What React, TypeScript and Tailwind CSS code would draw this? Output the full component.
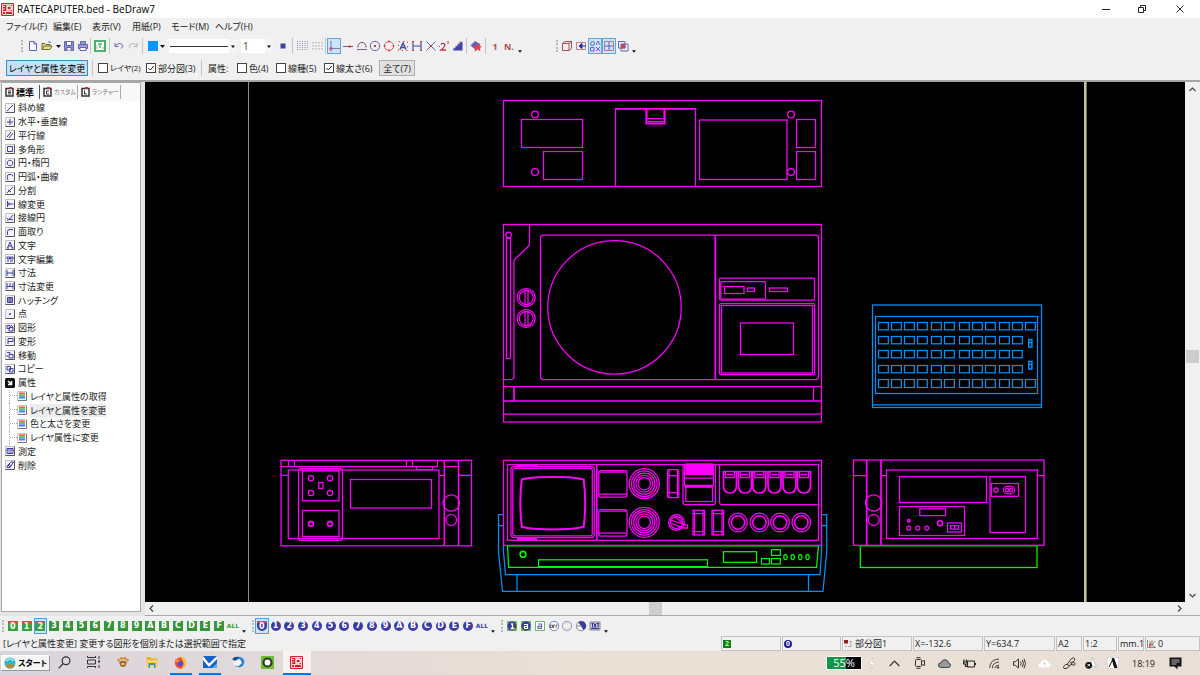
import { useState, type ReactNode } from 'react';

const HEX = ['0', '1', '2', '3', '4', '5', '6', '7', '8', '9', 'A', 'B', 'C', 'D', 'E', 'F'];

/* ---------- small shared parts ---------- */

function Sep() {
  return <span className="h-4 w-px shrink-0 bg-[#c4c4c4]" />;
}

function Grip() {
  return <span className="h-3 w-0 shrink-0 border-l-2 border-dotted border-[#b8b8b8]" />;
}

function Caret({ label }: { label: string }) {
  return (
    <button aria-label={label} className="flex h-4 w-2 shrink-0 items-center justify-center">
      <svg width="5" height="3" viewBox="0 0 5 3"><path d="M0 0h5L2.5 3z" fill="#111" /></svg>
    </button>
  );
}

function LowCaret({ label }: { label: string }) {
  return (
    <button aria-label={label} className="flex h-4 w-2 shrink-0 items-end justify-center pb-px">
      <svg width="4" height="3" viewBox="0 0 5 3"><path d="M0 0h5L2.5 3z" fill="#111" /></svg>
    </button>
  );
}

function Tool({ label, active, children }: { label: string; active?: boolean; children: ReactNode }) {
  return (
    <button
      aria-label={label}
      className={
        active
          ? 'flex h-4 w-full min-w-3.5 items-center justify-center border border-[#5aa7e0] bg-[#cce4f7]'
          : 'flex h-4 w-full min-w-3.5 items-center justify-center'
      }
    >
      <svg width="12" height="12" viewBox="0 0 12 12" fill="none" stroke="#6464b4" strokeWidth="1" className="shrink-0">
        {children}
      </svg>
    </button>
  );
}

/* ---------- title and menu ---------- */

function AppMark({ size }: { size: number }) {
  return (
    <svg width={size} height={size} viewBox="0 0 13 13">
      <rect width="13" height="13" rx="1" fill="#d3202b" />
      <path d="M1.500 1.500h10v10h-10z" fill="none" stroke="#fff" strokeWidth="0.8" />
      <path d="M6 3h2.500q2 0 2 2t-2 2H6z" fill="none" stroke="#fff" strokeWidth="1.300" />
      <path d="M2 3.500h2M2 6h2M2 8.500h9M4.500 8.500v2.500" stroke="#fff" strokeWidth="0.8" />
    </svg>
  );
}

function TitleBar() {
  return (
    <header className="flex h-[18px] shrink-0 items-center bg-white pl-px text-black">
      <AppMark size={13} />
      <h1 className="ml-[3px] text-[10px] leading-none">RATECAPUTER.bed - BeDraw7</h1>
      <div className="ml-auto flex">
        <button aria-label="最小化" className="flex h-[18px] w-9 items-center justify-center">
          <svg width="8" height="8" viewBox="0 0 8 8"><path d="M0 4.5h8" stroke="#222" /></svg>
        </button>
        <button aria-label="元に戻す" className="flex h-[18px] w-9 items-center justify-center">
          <svg width="8" height="8" viewBox="0 0 8 8" fill="none" stroke="#222"><path d="M.5 2.5h5v5h-5zM2.5 2.5v-2h5v5h-2" /></svg>
        </button>
        <button aria-label="閉じる" className="flex h-[18px] w-10 items-center justify-center">
          <svg width="8" height="8" viewBox="0 0 8 8"><path d="M.5.5l7 7M7.5.5l-7 7" stroke="#222" /></svg>
        </button>
      </div>
    </header>
  );
}

function MenuBar() {
  const items = ['ファイル(F)', '編集(E)', '表示(V)', '用紙(P)', 'モード(M)', 'ヘルプ(H)'];
  return (
    <nav className="grid h-[18px] shrink-0 grid-cols-[47px_39px_40px_39px_44px_40px] items-center pl-1.5 text-[9px]">
      {items.map((t) => (
        <button key={t} className="whitespace-nowrap text-left">{t}</button>
      ))}
    </nav>
  );
}

/* ---------- main toolbar ---------- */

function ToolBar() {
  return (
    <div className="flex h-5 shrink-0 items-center pl-[21px]">
      <Grip />
      <div className="ml-[3px] flex w-16 items-center">
        <Tool label="新規"><path d="M2.500 1.500h4.500l2.500 2.500v6.500h-7zM7 1.500V4h2.500" fill="#fff" /></Tool>
        <Tool label="開く"><path d="M1 9.500V3.500h3l1 1h4v1.500M1 9.500l2-3.500h8l-2 3.500z" fill="#e8e08a" stroke="#6d6d35" /><path d="M7 2q2-1 3 1" /></Tool>
        <Caret label="最近使ったファイル" />
        <Tool label="保存"><path d="M1.500 1.500h9v9h-9z" fill="#8c8ccc" /><path d="M3.500 1.500h5v4h-5zM4 10.500v-3h4v3" fill="#fff" /></Tool>
        <Tool label="印刷"><path d="M3.500 4.500v-3h5v3M1.500 4.500h9v4h-9z" fill="#9c9cd4" /><path d="M3 7.500h6v3H3z" fill="#fff" /></Tool>
      </div>
      <Sep />
      <div className="mx-px w-4">
        <Tool label="図面テンプレート"><path d="M1 1h10v10H1z" fill="#fff" stroke="#1f9d45" strokeWidth="1.600" /><path d="M4 4h4M6 4v4M2.500 6h1M2.500 8h1M9 8h1" stroke="#1f9d45" /></Tool>
      </div>
      <Sep />
      <div className="mx-0.5 flex w-7">
        <Tool label="元に戻す"><path d="M2 3v3.500h3.500M2.200 6Q6 2 9 4.500q2 2.500-1 4" /></Tool>
        <Tool label="やり直し"><path d="M10 3v3.500H6.500M9.800 6Q6 2 3 4.500q-2 2.500 1 4" stroke="#b0b0b8" /></Tool>
      </div>
      <Sep />
      <button aria-label="描画色" className="ml-[5px] h-2.5 w-2.5 bg-[#0795ff]" />
      <Caret label="色の選択" />
      <div className="ml-[3px] grid w-[68px] items-center">
        <select aria-label="線の種類" className="col-start-1 row-start-1 h-3.5 appearance-none bg-white text-transparent">
          <option>実線</option>
        </select>
        <svg className="pointer-events-none col-start-1 row-start-1" width="68" height="14" viewBox="0 0 68 14">
          <path d="M60 0h8v14h-8z" fill="#f4f4f4" />
          <path d="M1 7.500h58" stroke="#333" />
          <path d="M62 6.500h4l-2 2.500z" fill="#111" />
        </svg>
      </div>
      <div className="ml-1 grid w-8 items-center">
        <select aria-label="線の太さ" defaultValue="1" className="col-start-1 row-start-1 h-3.5 appearance-none bg-white pl-0.5 text-[10px] leading-none text-[#5a4630]">
          <option>1</option>
          <option>2</option>
        </select>
        <svg className="pointer-events-none col-start-1 row-start-1" width="32" height="14" viewBox="0 0 32 14">
          <path d="M24 0h8v14h-8z" fill="#f4f4f4" />
          <path d="M26 6.500h4l-2 2.500z" fill="#111" />
        </svg>
      </div>
      <div className="ml-[3px] w-3.5">
        <Tool label="点の形"><path d="M3.500 3.500h5v5h-5z" fill="#4040a8" stroke="none" /></Tool>
      </div>
      <span className="w-0.5" />
      <Sep />
      <div className="ml-px flex w-[30px]">
        <Tool label="グリッド"><path d="M1.500 1v10M4 1v10M6.500 1v10M9 1v10M11.300 1v10" stroke="#8c8cac" strokeDasharray="1 1" /></Tool>
        <Tool label="グリッド吸着"><path d="M2 2v9M5 2v9M8 2v9M11 2v9" stroke="#a0a0a0" strokeDasharray="1.500 1.500" /></Tool>
      </div>
      <span className="w-px" />
      <Sep />
      <div className="ml-px grid w-[138px] grid-cols-10">
        <Tool label="端点" active><path d="M3 1v10M1 8.500h10" stroke="#7a7ac0" /><path d="M2 7.500h2v2H2zM3 1v1M10 8.500h2M3 10.500v1" stroke="#e05050" strokeWidth=".8" /></Tool>
        <Tool label="線上"><path d="M1 6.500h10" stroke="#7a5080" /><path d="M7 5v3l3-1.500z" fill="#e03030" stroke="none" /></Tool>
        <Tool label="中点"><path d="M2 7q0-4.500 4-4.500T10 7M1 9.500h10" /><path d="M5 2.500h2M5 9.500h2M1.500 7h1M9.500 7h1" stroke="#e03030" /></Tool>
        <Tool label="円の中心"><circle cx="6" cy="6" r="4.700" /><path d="M5 6h2" stroke="#e03030" strokeWidth="2" /></Tool>
        <Tool label="円周"><circle cx="6" cy="6" r="4.500" stroke="#e05868" /><path d="M5 1.500h2M5 10.500h2M1.500 5v2M10.500 5v2" stroke="#e03030" strokeWidth="1.300" /></Tool>
        <Tool label="文字"><path d="M1.500 1.500h9v9h-9z" stroke="#e05050" strokeDasharray="1.500 3" /><path d="M3 9.500L6 3l3 6.500M4 7.500h4" stroke="#4a4aa8" strokeWidth="1.500" /></Tool>
        <Tool label="寸法"><path d="M2 2v8M10 2v8M2 6h8" stroke="#4a4aa8" strokeWidth="1.200" /><path d="M1 1.500h2M9 1.500h2M1 10.500h2M9 10.500h2" stroke="#e03030" /></Tool>
        <Tool label="交点"><path d="M1.500 1.500l9 9M10.500 1.500l-9 9" /><path d="M5.500 5.500h1v1h-1z" stroke="#e03030" /></Tool>
        <Tool label="二点間"><path d="M3 4.500q1.500-2 3.500-.5Q8 6 3 10h5" stroke="#b83848" strokeWidth="1.300" /><path d="M10 1v3M1 6.500h1" stroke="#e03030" /></Tool>
        <Tool label="塗り"><path d="M1.500 10.500V8h2V6h2V4h2V2h3v8.500z" fill="#4444a4" stroke="#9898cc" strokeWidth=".8" /></Tool>
      </div>
      <span className="w-px" />
      <Sep />
      <div className="mx-0.5 w-3.5">
        <Tool label="消しゴム"><path d="M1 5.500l4-4 5 3-4 5z" fill="#5c5cb8" /><path d="M6 6l1.500-2L9 6l2 .5-1.500 1.500.5 2.500-2.500-1.500L5 11l.5-2.500L4 7z" fill="#e04048" stroke="#e04048" /></Tool>
      </div>
      <Sep />
      <div className="ml-0.5 flex w-7 text-[9px] font-bold leading-none text-[#a85050]">
        <button className="h-4 w-3.5">1</button>
        <button className="h-4 w-3.5">N.</button>
      </div>
      <LowCaret label="その他のスナップ" />
      <span className="w-8" />
      <Grip />
      <div className="ml-0.5 grid w-[70px] grid-cols-5">
        <Tool label="立体"><path d="M1.500 3.500h6.500v7H1.500zM1.500 3.500L4 1.500h6.500v7L8 10.500M8 3.500l2.500-2" stroke="#a85058" /></Tool>
        <Tool label="左へ"><path d="M1.500 2.500h9v7h-9z" stroke="#c08088" /><path d="M4 6h7M7 3.500L4 6l3 2.500z" fill="#2c2c98" stroke="#2c2c98" /></Tool>
        <Tool label="文字図形" active><circle cx="3.500" cy="3.500" r="2" /><path d="M7 5l2-4 2 4M1.500 7.500h3.500v3.500H1.500zM7 7l4 4M11 7l-4 4" /></Tool>
        <Tool label="用紙枠" active><path d="M1.500 1.500h9v9h-9z" stroke="#b07888" /><path d="M6 2v8M2 6h8" stroke="#5c5cc0" /></Tool>
        <Tool label="重なり"><path d="M1.500 1.500h6.500v6.500H1.500zM4 4h7v7H4z" /><path d="M4.500 4.500h3.500v3.500H4.500z" fill="#c04858" stroke="#c04858" /></Tool>
      </div>
      <LowCaret label="その他の表示" />
    </div>
  );
}

/* ---------- option row ---------- */

function Check({ text, initial, className }: { text: string; initial?: boolean; className: string }) {
  const [on, setOn] = useState(!!initial);
  return (
    <label className={className}>
      <span className="grid h-2.5 w-2.5 shrink-0 place-items-center">
        <input
          type="checkbox"
          checked={on}
          onChange={(e) => setOn(e.target.checked)}
          className="col-start-1 row-start-1 h-2.5 w-2.5 appearance-none border border-[#444] bg-white"
        />
        {on && (
          <svg className="pointer-events-none col-start-1 row-start-1" width="8" height="8" viewBox="0 0 8 8">
            <path d="M1.300 4l2 2L6.800 2" fill="none" stroke="#222" />
          </svg>
        )}
      </span>
      {text}
    </label>
  );
}

function OptionRow() {
  return (
    <div className="flex h-[26px] shrink-0 items-center whitespace-nowrap border-b-2 border-[#a6a6a6] pl-1.5 text-[9px] leading-none">
      <button className="h-4 w-[82px] border border-[#3c8cc8] bg-[#c4e0f5] text-black">レイヤと属性を変更</button>
      <span className="w-1" />
      <Sep />
      <Check text="レイヤ(2)" className="ml-[5px] flex w-12 items-center gap-0.5 text-[8px]" />
      <Check text="部分図(3)" initial className="flex w-[55px] items-center gap-0.5" />
      <Sep />
      <span className="ml-1.5 w-[29px]">属性:</span>
      <Check text="色(4)" className="flex w-[39px] items-center gap-0.5" />
      <Check text="線種(5)" className="flex w-12 items-center gap-0.5" />
      <Check text="線太さ(6)" initial className="flex w-[55px] items-center gap-0.5" />
      <button className="h-4 w-9 border border-[#adadad] bg-[#e1e1e1]">全て(7)</button>
    </div>
  );
}

/* ---------- side panel ---------- */

type Entry = { name: string; art: string; sub?: boolean; current?: boolean; dark?: boolean };

const ENTRIES: Entry[] = [
  { name: '斜め線', art: 'M2 8L8 2' },
  { name: '水平・垂直線', art: 'M5 2v6M2 5h6' },
  { name: '平行線', art: 'M2 7l4-5M4 8l4-5' },
  { name: '多角形', art: 'M2.500 2.500h5v5h-5z' },
  { name: '円・楕円', art: 'M5 2.200a2.800 2.800 0 1 0 .01 0z' },
  { name: '円弧・曲線', art: 'M3 8Q1 3 4 2.500Q7 2 8 4' },
  { name: '分割', art: 'M2 8L8 2M3 5l3 2' },
  { name: '線変更', art: 'M2.500 2v6M2.500 5h6M4 3.500v3' },
  { name: '接線円', art: 'M1.500 5L4 7l4-5M2 7.500q2-3 6-.5' },
  { name: '面取り', art: 'M2.500 8V4.500Q2.500 2.500 5 2.500h3' },
  { name: '文字', art: 'M2.500 8L5 2l2.500 6M3.500 6h3M2 8h2M6.500 8h2' },
  { name: '文字編集', art: 'M2 3h2.500v2H2zM5.500 3H8v2H5.500zM2 7h2M5 7h3' },
  { name: '寸法', art: 'M2 2v6M8 2v6M2 5h6' },
  { name: '寸法変更', art: 'M2 2v6M8 2v6M2 5.500h6M5 2v3' },
  { name: 'ハッチング', art: 'M2.500 2.500h5v5h-5zM3 4h4M3 6h4M5 3v4' },
  { name: '点', art: 'M4.500 4.500h1v1h-1z' },
  { name: '図形', art: 'M2 2.500h3v3H2zM4 4.500h4v3.500H4zM6 2l2 2' },
  { name: '変形', art: 'M3 8V2.500h5v3H3' },
  { name: '移動', art: 'M2 2.500h3v2M4 4.500h4V8H4zM2 5v2' },
  { name: 'コピー', art: 'M2 2.500h3.500V6H2zM4.500 4.500H8V8H4.500z' },
  { name: '属性', art: 'M3 3l3 3M6.500 3v3.500H3', dark: true },
  { name: 'レイヤと属性の取得', art: '', sub: true },
  { name: 'レイヤと属性を変更', art: '', sub: true, current: true },
  { name: '色と太さを変更', art: '', sub: true },
  { name: 'レイヤ属性に変更', art: '', sub: true },
  { name: '測定', art: 'M2 2.500h6v5H2zM2 4h6M3.500 6h3' },
  { name: '削除', art: 'M2 6l4-4h2.500L5 7.500H2zM3 5l2 2M4 4l2 2' },
];

function EntryIcon({ e }: { e: Entry }) {
  if (e.sub) {
    return (
      <svg width="10" height="10" viewBox="0 0 10 10" className="shrink-0">
        <path d="M.5.5h9v9h-9z" fill="#f8f8f8" stroke="#c4c4c4" />
        <path d="M9.500 1v8.500H1" fill="none" stroke="#777" />
        <rect x="2" y="1.500" width="6" height="2" fill="#ff5a3c" />
        <rect x="2" y="3.500" width="6" height="2" fill="#3cd070" />
        <rect x="2" y="5.500" width="6" height="2" fill="#5078ff" />
      </svg>
    );
  }
  if (e.dark) {
    return (
      <svg width="10" height="10" viewBox="0 0 10 10" className="shrink-0">
        <rect width="10" height="10" rx="1.500" fill="#111" />
        <path d={e.art} fill="none" stroke="#fff" strokeWidth="1.500" />
      </svg>
    );
  }
  return (
    <svg width="10" height="10" viewBox="0 0 10 10" className="shrink-0">
      <path d="M.5.5h9v9h-9z" fill="#f4f4f8" stroke="#c0c0c0" />
      <path d="M9.500.5v9H.5" fill="none" stroke="#555" />
      <path d={e.art} fill="none" stroke="#3c3ca8" strokeWidth="1" />
    </svg>
  );
}

function TabIcon({ d }: { d: string }) {
  return (
    <svg width="9" height="10" viewBox="0 0 9 10" className="shrink-0">
      <path d="M1 1.500h7v7.500H1z" fill="#fff" stroke="#333" strokeWidth="1.500" />
      <path d="M4 0h3v2H4z" fill="#c03038" />
      <path d={d} fill="none" stroke="#333" />
    </svg>
  );
}

function SidePanel() {
  return (
    <aside className="flex w-[145px] shrink-0 flex-col bg-[#e4e4e4] pb-1 pl-px pr-1">
      <div className="flex flex-1 flex-col border border-[#a8a8a8] bg-white">
        <div role="tablist" className="flex h-[18px] shrink-0 items-center bg-[#f8f8f8] text-[6px] leading-none text-[#777]">
          <button role="tab" aria-selected="true" className="flex h-3.5 w-[38px] items-center gap-0.5 whitespace-nowrap border-r border-[#555] pl-[3px] text-[9px] font-bold text-black">
            <TabIcon d="M3 4h3M3 5.500h3M3 7h3" />標準
          </button>
          <button role="tab" aria-selected="false" className="flex h-3.5 w-[38px] items-center gap-0.5 whitespace-nowrap border-r border-[#aaa] pl-[3px]">
            <TabIcon d="M6 4H3.500v3H6" />カスタム
          </button>
          <button role="tab" aria-selected="false" className="flex h-3.5 w-[43px] items-center gap-0.5 whitespace-nowrap border-r border-[#aaa] pl-[3px]">
            <TabIcon d="M3.500 3.500V7H6" />ランチャー
          </button>
        </div>
        <ul className="grid h-[371px] shrink-0 auto-rows-fr text-[9px] leading-none text-[#222]">
          {ENTRIES.map((e) => (
            <li key={e.name + (e.sub ? '-sub' : '')} className="flex min-h-0 items-center pl-[3px]">
              {e.sub && <span className="ml-1 h-full w-2 border-l border-dotted border-[#aaa]"><span className="block h-1/2 border-b border-dotted border-[#aaa]" /></span>}
              <button className="flex h-full items-center gap-[3px] whitespace-nowrap">
                <EntryIcon e={e} />
                <span className={e.current ? 'bg-[#ececec] py-0.5' : ''}>{e.name}</span>
              </button>
            </li>
          ))}
        </ul>
      </div>
    </aside>
  );
}

/* ---------- drawing ---------- */

function Box({ x, y, r, b, rx = 0 }: { x: number; y: number; r: number; b: number; rx?: number }) {
  return <rect x={x} y={y} width={r - x} height={b - y} rx={rx} />;
}

const KEY_X = [878.5, 891.5, 904.5, 917.5, 931.5, 944.5, 959.5, 972.5, 985.5, 999.5, 1012.5, 1025.5];
const KEY_Y = [322.5, 336.5, 350.5, 365.5, 379.5];

function TopView() {
  return (
    <g>
      <Box x={503.5} y={100.5} r={821.5} b={186.5} />
      <Box x={521.5} y={119.5} r={582.5} b={147.5} />
      <Box x={543.5} y={151.5} r={582.5} b={179.5} />
      <path d="M615.500 186V108.500H695.500V186" />
      <path d="M615.500 109H695.500" />
      <path d="M646.500 109v14.500h18V109" strokeWidth="2.200" />
      <path d="M648 118.500h15M648 121.500h15" />
      <Box x={699.5} y={120} r={787} b={179.5} />
      <Box x={796.5} y={119.5} r={815.5} b={147.5} />
      <Box x={796.5} y={151.5} r={815.5} b={179.5} />
      {[535, 791].map((x) => [114.5, 172].map((y) => <circle key={`${x}-${y}`} cx={x} cy={y} r="3.400" />))}
    </g>
  );
}

function PlanView() {
  return (
    <g>
      <Box x={503.5} y={224.5} r={821.5} b={422} />
      <path d="M503.500 386.500h318M503.500 414h318M813.500 386.500v14.500" />
      <path d="M503.500 401h318M514 386.500V401" strokeWidth="1.700" />
      <circle cx="508.500" cy="235" r="2.800" />
      <Box x={506.5} y={238.5} r={510.5} b={358.5} />
      <path d="M529.500 224.500V243q0 2.500-2 4.200L515.500 258.500q-1.500 1.500-1.500 3V376q0 3.500-3 3.500h-7.500" />
      {[297.5, 318.5].map((y) => (
        <g key={y}>
          <circle cx="526.200" cy={y} r="9" />
          <circle cx="526.200" cy={y} r="7" />
          <path d={`M525 ${y - 8}v16M528 ${y - 8}v16`} />
        </g>
      ))}
      <Box x={540.5} y={235} r={818.5} b={379.5} rx={3} />
      <path d="M715.300 235v144.500" strokeWidth="1.800" />
      <circle cx="614.500" cy="307.300" r="66.700" />
      <Box x={719.5} y={278} r={814.5} b={300} rx={1} />
      <Box x={720.8} y={281.5} r={765.5} b={299} rx={1} />
      <Box x={724.5} y={286.5} r={744} b={293.5} />
      <Box x={747.5} y={288} r={754.5} b={291.5} />
      <Box x={769.5} y={288} r={787.5} b={291.5} />
      <Box x={719.5} y={303.5} r={814.5} b={374.5} rx={1} />
      <Box x={721.5} y={305.5} r={812.5} b={373} />
      <Box x={740.5} y={323} r={793.5} b={354.5} />
    </g>
  );
}

function FrontView() {
  return (
    <g>
      <Box x={503.5} y={460.3} r={821.5} b={545.3} />
      <Box x={507.5} y={464.5} r={818.5} b={540.3} />
      <path d="M596.800 464.500v76" strokeWidth="1.700" />
      <Box x={511} y={466.5} r={594.3} b={537.5} rx={3} />
      <Box x={512.8} y={468.3} r={592.3} b={535.8} rx={2} />
      <path d="M517 465.500h20M517 539h20" strokeWidth="2" />
      <path d="M521.800 479.500Q527 478 537 477.300Q553 476.500 569 477.300Q578 478 583.700 479.500Q586.700 503 583.700 526.700Q576 528.500 569 529Q553 529.800 537 529Q528 528.500 521.800 526.700Q518.800 503 521.800 479.500z" strokeWidth="2" />
      {[470.5, 509.5].map((y) => (
        <g key={y}>
          <Box x={598.8} y={y} r={627} b={y + 26.5} rx={2} />
          <path d={`M599 ${y + 23.5}h28M600 ${y + 1.5}h26`} />
        </g>
      ))}
      {[483.7, 522.3].map((y) => [15, 12.8, 10.6, 8.4, 6.2].map((r) => <circle key={`${y}-${r}`} cx="644.300" cy={y} r={r} />))}
      <Box x={667.5} y={469.5} r={678.8} b={497.5} rx={1} />
      <path d="M668 475.500h11M668 492.500h11M669 470v27M677.500 470v27" />
      <path d="M683 464.500V502q0 2.500 2 2.500h28.500q2 0 2-2.500V464.500" />
      <rect x="686" y="464" width="26.500" height="10.500" fill="#ff00ff" />
      <path d="M684.500 464.500V485.300h29V464.500M684.500 478h29" />
      <Box x={685.8} y={487} r={712.5} b={501.5} />
      <path d="M685 486.500h28" strokeWidth="2" />
      <path d="M719.500 464.500V502q0 2.500 2 2.500h97" />
      {[723.5, 738.5, 752.8, 768, 783, 797.5].map((x) => (
        <g key={x}>
          <path d={`M${x} 471.500h13v14q0 7.500-6.500 7.500t-6.500-7.500z`} strokeWidth="1.700" />
          <path d={`M${x + 2} 472v5.500h9V472M${x + 3.5} 474.500h6`} strokeWidth="1.300" />
        </g>
      ))}
      <circle cx="676.500" cy="522.500" r="7.800" />
      <circle cx="676.500" cy="522.500" r="6" />
      <path d="M670.500 520l14 4.500 3 .5v3h-4l-13-5M674 516l10 8" strokeWidth="1.300" />
      {[693, 712].map((x) => (
        <g key={x}>
          <Box x={x} y={510.3} r={x + 11.5} b={535} />
          <path d={`M${x} 513.500h11M${x} 531.500h11M${x + 1.5} 511v24M${x + 10} 511v24`} />
        </g>
      ))}
      {[738, 759.4, 780, 801.3].map((x) => (
        <g key={x}>
          <circle cx={x} cy="522.500" r="9.300" />
          <circle cx={x} cy="522.500" r="6.700" strokeWidth="1.600" />
        </g>
      ))}
    </g>
  );
}

function LeftView() {
  return (
    <g>
      <Box x={281} y={460.3} r={471.5} b={545.8} />
      <path d="M281 466.500h156.500v-6M288.500 460.500v6M294.500 460.500v6M406.500 460.500v6M412.500 460.500v6M416.500 466.500v3h16v-3" />
      <path d="M281 475.300h7M439 475.300h5M458.500 475.300h13M444 466.500h14.500" />
      <path d="M444.300 460.500v85M458.500 460.500v85" strokeWidth="1.500" />
      <Box x={288.3} y={470} r={439} b={538.5} />
      <Box x={298.5} y={468.5} r={342.5} b={540.3} rx={2} />
      <Box x={302.5} y={471} r={339} b={500.8} />
      <Box x={302.5} y={510.5} r={339} b={536.5} />
      {[311, 330].map((x) => (
        <g key={x}>
          <circle cx={x} cy="478.300" r="2.700" />
          <circle cx={x} cy="493" r="2.700" />
          <circle cx={x} cy="523.700" r="2.400" strokeWidth="1.700" />
        </g>
      ))}
      <Box x={318.8} y={482.5} r={323} b={488.5} />
      <Box x={350.5} y={479.5} r={431.5} b={508} />
      <circle cx="451.300" cy="503" r="8.200" />
      <circle cx="451.200" cy="520" r="5.500" />
    </g>
  );
}

function RightView() {
  return (
    <g>
      <Box x={853.5} y={460} r={1044} b={545.3} />
      <path d="M866.700 460v85.300M881 460v85.300" strokeWidth="1.700" />
      <path d="M853.500 475.500h13M881 475.500h5.500M1037.500 475.500h6.500" />
      <Box x={886.5} y={470} r={1037.3} b={538.5} />
      <Box x={899.5} y={476.7} r={986.5} b={502.5} />
      <Box x={899.5} y={506.5} r={964.5} b={535.5} />
      <Box x={919.8} y={508.8} r={945.5} b={515.6} />
      <circle cx="908.700" cy="520.700" r="1.300" strokeWidth="1.500" />
      {[908.7, 917.8, 926.7].map((x) => <circle key={x} cx={x} cy="528" r="2" />)}
      <circle cx="940" cy="523.300" r="2.500" strokeWidth="1.600" />
      <Box x={947.5} y={523} r={961.5} b={532} />
      <path d="M950.500 525.500h8v3.500h-8zM954.500 525.500v3.500" />
      <Box x={990} y={476.7} r={1025.5} b={532.5} />
      <Box x={991.3} y={483.5} r={1018.5} b={496.3} />
      <circle cx="996" cy="490" r="2.200" />
      <ellipse cx="1009" cy="490" rx="5.700" ry="3.800" />
      <circle cx="1007" cy="490" r="1.600" />
      <circle cx="1011" cy="490" r="1.600" />
      <circle cx="873.700" cy="503" r="8.200" />
      <circle cx="873.700" cy="520" r="5.500" />
    </g>
  );
}

function BlueParts() {
  return (
    <g stroke="#0090f8">
      <Box x={872.5} y={305} r={1041.5} b={407.5} />
      <path d="M872.500 404.800h169" />
      <Box x={875.5} y={316.5} r={1037.5} b={393.5} />
      {KEY_Y.map((y, row) =>
        KEY_X.map((x, col) =>
          col === 11 && row > 0 && row < 4 ? null : <rect key={`${x}-${y}`} x={x} y={y} width="9.800" height={row === 4 ? 8 : 7.300} />
        )
      )}
      <path d="M1028.700 339.500h3.200v7.500h-3.200zM1028.700 342.500h3.200M1028.700 361.500h3.200v7.500h-3.200zM1028.700 364.500h3.200" strokeWidth="1.500" />
      <path d="M503.500 514.500h-5V552l4 39.300H823L826.700 552V514.500H821.500M498.500 525.500h5V552l2 22.500H820L821.500 552V525.500h5M517 574.500v17M808.500 574.500v17" />
    </g>
  );
}

function GreenParts() {
  return (
    <g stroke="#00f800">
      <path d="M507.500 545.800l1.200 21.500H816.500l2-21.500z" />
      <Box x={860.3} y={545.8} r={1037} b={567.5} />
      <circle cx="523" cy="554.300" r="2.900" strokeWidth="1.600" />
      <Box x={538.5} y={559.8} r={707.5} b={566.6} />
      <Box x={723.5} y={551.7} r={756.5} b={562.3} />
      <Box x={771.5} y={549.7} r={780.3} b={555.4} />
      <Box x={761.5} y={558.5} r={769.5} b={564} />
      <Box x={771.5} y={558.5} r={780.3} b={564} />
      {[785.5, 792.7, 800.2, 807.5].map((x) => <ellipse key={x} cx={x} cy="557" rx="1.700" ry="2.500" />)}
    </g>
  );
}

function Canvas() {
  return (
    <div className="flex min-w-0 flex-1 flex-col">
      <div className="flex min-h-0 flex-1">
        <main className="min-h-0 min-w-0 flex-1 bg-black">
          <svg className="block h-full w-full" viewBox="145 82 1040 520" role="img" aria-label="図面" fill="none" stroke="#ff00ff" strokeWidth="1.250">
            <path d="M248.500 82v520" stroke="#8c8c8c" strokeWidth="1" />
            <path d="M1085.300 82v520" stroke="#c4c4a0" strokeWidth="2.600" />
            <BlueParts />
            <GreenParts />
            <TopView />
            <PlanView />
            <FrontView />
            <LeftView />
            <RightView />
          </svg>
        </main>
        <div className="flex w-[15px] shrink-0 flex-col items-center bg-[#f0f0f0]">
          <button aria-label="上へ" className="flex h-3.5 w-full items-center justify-center">
            <svg width="7" height="5" viewBox="0 0 7 5"><path d="M.5 4l3-3 3 3" fill="none" stroke="#444" strokeWidth="1.200" /></svg>
          </button>
          <div className="flex w-full flex-1 flex-col items-center">
            <span className="flex-[254]" />
            <span className="h-[13px] w-[13px] bg-[#cdcdcd]" />
            <span className="flex-[225]" />
          </div>
          <button aria-label="下へ" className="flex h-3.5 w-full items-center justify-center">
            <svg width="7" height="5" viewBox="0 0 7 5"><path d="M.5 1l3 3 3-3" fill="none" stroke="#444" strokeWidth="1.200" /></svg>
          </button>
        </div>
      </div>
      <div className="flex h-3.5 shrink-0 items-center border-b border-[#a8a8a8] bg-[#f0f0f0] pr-[15px]">
        <button aria-label="左へ" className="flex h-3.5 w-3 items-center justify-center">
          <svg width="5" height="7" viewBox="0 0 5 7"><path d="M4 .5l-3 3 3 3" fill="none" stroke="#444" strokeWidth="1.200" /></svg>
        </button>
        <div className="flex flex-1">
          <span className="flex-[492]" />
          <span className="h-[13px] w-[13px] bg-[#cdcdcd]" />
          <span className="flex-[511]" />
        </div>
        <button aria-label="右へ" className="flex h-3.5 w-3 items-center justify-center">
          <svg width="5" height="7" viewBox="0 0 5 7"><path d="M1 .5l3 3-3 3" fill="none" stroke="#444" strokeWidth="1.200" /></svg>
        </button>
      </div>
    </div>
  );
}

/* ---------- layer bar and status ---------- */

function LayerBar() {
  return (
    <div className="flex h-5 shrink-0 items-center pl-0.5 font-['DejaVu_Sans','Noto_Sans_CJK_JP',sans-serif] text-[8px] font-bold leading-none text-white">
      <Grip />
      <div className="ml-0.5 grid w-[220px] grid-cols-[repeat(16,minmax(0,1fr))]">
        {HEX.map((h, i) => (
          <button key={h} className={i === 2 ? 'flex h-4 items-center justify-center border border-[#4ca0e0] bg-[#cce4f7]' : 'flex h-4 items-center justify-center'}>
            <span className={i < 3 ? 'h-2.5 w-2.5 shrink-0 border-t-2 border-[#e04838] bg-[#38a040] leading-[8px]' : 'h-2.5 w-2.5 shrink-0 bg-[#38953c] leading-[10px]'}>{h}</span>
          </button>
        ))}
      </div>
      <button className="h-4 w-3.5 text-[6px] text-[#3c9c40]">ALL</button>
      <LowCaret label="レイヤの一覧" />
      <span className="w-1" />
      <Grip />
      <div className="ml-px grid w-[220px] grid-cols-[repeat(16,minmax(0,1fr))]">
        {HEX.map((h, i) => (
          <button key={h} className={i === 0 ? 'flex h-4 items-center justify-center border border-[#4ca0e0] bg-[#cce4f7]' : 'flex h-4 items-center justify-center'}>
            <span className={i === 0 ? 'h-2.5 w-2.5 shrink-0 rounded-b-full border-t-2 border-[#e04838] bg-[#3c3ca0] leading-[8px]' : 'h-2.5 w-2.5 shrink-0 rounded-full bg-[#3c3ca0] leading-[10px]'}>{h}</span>
          </button>
        ))}
      </div>
      <button className="h-4 w-3.5 text-[6px] text-[#4040a0]">ALL</button>
      <LowCaret label="グループの一覧" />
      <span className="w-1" />
      <Grip />
      <div className="ml-0.5 grid w-[97px] grid-cols-7">
        <Tool label="レイヤ番号"><path d="M1 1h10v10H1z" fill="#68b868" stroke="none" /><circle cx="6" cy="6" r="4.500" fill="#3c3ca0" stroke="none" /><path d="M5 4h1.500v4.500M4.500 8.500h4" stroke="#fff" strokeWidth="1.300" /></Tool>
        <Tool label="文字レイヤ"><path d="M1 1h10v10H1z" fill="#68b868" stroke="none" /><circle cx="6" cy="6" r="4.700" fill="#3c3ca0" stroke="none" /><path d="M4 4.500h3.500v4H4.500V6.500h3" stroke="#fff" strokeWidth="1.200" /></Tool>
        <Tool label="文字グループ"><path d="M1.500 1.500h9v9h-9z" stroke="#68b868" fill="#fff" /><path d="M4 4h3.500v4.500H4V6.300h3.500" strokeWidth="1.200" /></Tool>
        <Tool label="非表示"><circle cx="6" cy="6" r="4.700" fill="#fff" stroke="#7c7cc0" /><path d="M2.500 5h2v2.500h-2zM5.500 8V5H7M8 8V5h1.500" stroke="#444" strokeWidth=".8" /></Tool>
        <Tool label="淡色"><circle cx="6" cy="6" r="4.700" fill="#e4e4e4" stroke="#9c9ccc" /><path d="M3.500 5h2v2h-2zM7 7V5h1.500" stroke="#fff" /></Tool>
        <Tool label="反転"><circle cx="6" cy="6" r="4.700" fill="#fff" stroke="#888" /><path d="M3 2l3 4 2.500 4.200A4.700 4.700 0 0 0 6 1.300z" fill="#3c3ca0" stroke="none" /><path d="M2 6h4" stroke="#888" /></Tool>
        <Tool label="文字設定"><path d="M1 2h10v8H1z" fill="#c8c8d0" stroke="#888" /><path d="M2.500 3.500h2M3.500 3.500v4M5 3.500l2 4M7 3.500l-2 4M8 3.500h2M9 3.500v4M2 8.500h8" stroke="#3030a0" /></Tool>
      </div>
      <LowCaret label="その他の設定" />
    </div>
  );
}

function StatusBar() {
  const cell = 'flex h-full items-center overflow-hidden whitespace-nowrap border border-[#c2c2c2] pl-px';
  return (
    <footer className="flex h-[15px] shrink-0 items-center pl-[3px] text-[9px] leading-none text-[#222]">
      <p className="whitespace-nowrap">[レイヤと属性変更] 変更する図形を個別または選択範囲で指定</p>
      <div className="ml-auto grid h-full shrink-0 grid-cols-[60px_59px_70px_70px_71px_26px_34px_26px_55px] gap-x-px">
        <span className={cell}><b className="h-2 w-2 bg-[#108010] text-center text-[7px] leading-[8px] text-[#c8f0c8]">2</b></span>
        <span className={cell}><b className="h-2 w-2 rounded-full bg-[#181890] text-center text-[7px] leading-[8px] text-white">0</b></span>
        <span className={cell}>
          <svg width="8" height="8" viewBox="0 0 8 8" className="mr-[3px]"><path d="M0 0h4v3.500H0z" fill="#902020" /><path d="M5 1.500h2.500M7 1v6M4 6.500h3M1 6.500h2" fill="none" stroke="#aaa" /></svg>
          部分図1
        </span>
        <span className={cell}>X=-132.6</span>
        <span className={cell}>Y=634.7</span>
        <span className={cell}>A2</span>
        <span className={cell}>1:2</span>
        <span className={cell}>mm.1</span>
        <span className={cell}>
          <svg width="9" height="8" viewBox="0 0 9 8" className="mr-0.5" fill="none" stroke="#888"><path d="M.5 0v7.500H9M2 1l2 2M5 0v4M8 1L5 5l3 2" /><path d="M2 5h3M3 3v4" stroke="#d02020" /></svg>
          0
        </span>
      </div>
    </footer>
  );
}

/* ---------- task bar ---------- */

function TaskButton({ label, state, className, children }: { label: string; state?: 'open' | 'front'; className: string; children: ReactNode }) {
  return (
    <button aria-label={label} className={className}>
      <span className={state === 'front' ? 'flex h-full w-7 items-center justify-center border-b-2 border-[#0a78d4] bg-[#f7f3f1]' : state === 'open' ? 'flex h-full w-[22px] items-center justify-center border-b-2 border-[#0a78d4]' : 'flex h-full items-center justify-center border-b-2 border-transparent'}>
        {children}
      </span>
    </button>
  );
}

function TaskBar() {
  const slot = 'flex h-full w-[29px] shrink-0 justify-center';
  const tray = 'flex h-full w-[25px] shrink-0 items-center justify-center';
  return (
    <div className="flex h-6 shrink-0 items-center bg-linear-to-r from-[#d9d4dc] via-[#ebe0d5] to-[#e9dfd6]">
      <button className="ml-px flex h-4 w-[49px] items-center gap-0.5 whitespace-nowrap border border-[#999] border-l-white border-t-white bg-[#f4f4f4] pl-0.5 text-[8px] font-bold leading-none text-black">
        <svg width="12" height="12" viewBox="0 0 12 12" className="shrink-0">
          <circle cx="6" cy="6" r="5.500" fill="#2cb8c8" />
          <path d="M1 8q5-2 10 0-2 3.500-5 3.500T1 8z" fill="#a89048" />
          <path d="M2.500 4Q6 0 9.500 4" fill="none" stroke="#a8f0f4" strokeWidth="1.500" />
        </svg>
        スタート
      </button>
      <TaskButton label="検索" className={slot}>
        <svg width="13" height="13" viewBox="0 0 13 13" fill="none" stroke="#333" strokeWidth="1.200"><circle cx="8" cy="4.700" r="3.900" /><path d="M5.200 7.500L.7 12.300" /></svg>
      </TaskButton>
      <TaskButton label="タスクビュー" className={slot}>
        <svg width="13" height="12" viewBox="0 0 13 12" fill="none" stroke="#333"><path d="M.5 0v1.500h8V0M.5 4h8v4h-8zM.5 12v-1.500h8V12M12 0v3M12 9v3" /><path d="M12 4.500v2" strokeWidth="2" /></svg>
      </TaskButton>
      <TaskButton label="熊手" className={slot}>
        <svg width="12" height="12" viewBox="0 0 12 12"><path d="M2 6q4-2.500 8 0l-1.500 4q-2.500 2-5 0z" fill="#a86428" /><circle cx="1.500" cy="4" r="1.300" fill="#d88830" /><circle cx="4.500" cy="2.500" r="1.400" fill="#d88830" /><circle cx="7.800" cy="2.500" r="1.400" fill="#d88830" /><circle cx="10.500" cy="4" r="1.300" fill="#d88830" /><path d="M4.500 7h3v2h-3z" fill="#e8c890" /></svg>
      </TaskButton>
      <TaskButton label="エクスプローラー" className={slot}>
        <svg width="12" height="11" viewBox="0 0 12 11"><path d="M.5 0h4l1 1.500h6V10H.5z" fill="#e8b030" /><path d="M.5 3h11v7H.5z" fill="#fbd768" /><path d="M2.500 6h7v5H8V8H4v3H2.500z" fill="#2f8fd8" /></svg>
      </TaskButton>
      <TaskButton label="ブラウザー" state="open" className={slot}>
        <svg width="13" height="13" viewBox="0 0 13 13"><circle cx="6.500" cy="7" r="5.700" fill="#f0552c" /><path d="M7 0q5.500 3 5.200 8Q11 12 7 12.700 11 9 8.500 4z" fill="#ffc428" /><circle cx="6.300" cy="7.500" r="3" fill="#7040c8" /><path d="M1 3q3 0 5 2l-3 2z" fill="#ff8c28" /></svg>
      </TaskButton>
      <TaskButton label="メール" state="open" className={slot}>
        <svg width="14" height="12" viewBox="0 0 14 12"><path d="M0 0h14v12H0z" fill="#1464c8" /><path d="M0 0l6 7.500L14 0v3L6 11 0 4z" fill="#fff" /><path d="M9 12l5-5v5z" fill="#60b0f0" /></svg>
      </TaskButton>
      <TaskButton label="メッセージ" className={slot}>
        <svg width="13" height="12" viewBox="0 0 13 12"><circle cx="7" cy="6" r="5.300" fill="#2c80d0" /><path d="M1 5l7-2 2 4-4 3.500L2 9z" fill="#f4f4f8" /><path d="M0 3q3-3 7-2L3 5z" fill="#184c90" /></svg>
      </TaskButton>
      <TaskButton label="画面録画" className={slot}>
        <svg width="13" height="13" viewBox="0 0 13 13"><path d="M0 0h13v13H0z" fill="#6cc030" /><circle cx="6.500" cy="6.500" r="4" fill="#fff" stroke="#2c3c28" strokeWidth="2.200" /></svg>
      </TaskButton>
      <TaskButton label="BeDraw7" state="front" className={slot}>
        <AppMark size={13} />
      </TaskButton>
      <div className="ml-auto flex h-full items-center">
        <span className="h-3.5 w-9 border border-white bg-linear-to-r from-[#109848] from-55% to-black to-55% text-center text-[11px] leading-[12px] text-white">55%</span>
        <svg width="8" height="11" viewBox="0 0 8 11" className="mx-1.5"><path d="M5 0L1 6h2.500L2.500 11 7 4.500H4.500z" fill="#fff" stroke="#c8c0b8" strokeWidth=".5" /></svg>
        <button aria-label="隠れているインジケーター" className={tray}><svg width="11" height="7" viewBox="0 0 11 7"><path d="M.7 6l4.800-4.800L10.300 6" fill="none" stroke="#333" strokeWidth="1.200" /></svg></button>
        <button aria-label="カメラ" className={tray}><svg width="10" height="12" viewBox="0 0 10 12" fill="none" stroke="#333"><rect x=".5" y="2.500" width="6" height="7" rx="1" /><path d="M6.500 4.500l3-1v5l-3-1M1.500 .7h4M1.500 11.300h4" /></svg></button>
        <button aria-label="クラウド" className={tray}><svg width="13" height="9" viewBox="0 0 13 9"><path d="M3 8.500Q.5 8.500.5 6T3 4Q4 .5 7 .7t3.500 3.300q2 .2 2 2.300t-2 2.200z" fill="#999" stroke="#444" /></svg></button>
        <button aria-label="電源" className={tray}><svg width="13" height="9" viewBox="0 0 13 9" fill="none" stroke="#222"><path d="M4.500 2h7v6h-7zM12.500 4v2" /><path d="M1 .5v3M3.500 .5v3M.5 3h4v2h-4zM2.500 5v2.500h3" strokeWidth="1.200" /></svg></button>
        <button aria-label="ネットワーク" className={tray}><svg width="11" height="11" viewBox="0 0 11 11" fill="none" stroke="#444"><path d="M.7 10Q1 1.500 10 1M3.300 10.300Q3.500 4.500 10 4M6 10.300Q6.300 7.300 10 7" /><circle cx="9" cy="9.500" r=".8" fill="#333" /></svg></button>
        <button aria-label="音量" className={tray}><svg width="13" height="11" viewBox="0 0 13 11" fill="none" stroke="#333"><path d="M.5 3.700h2L5.500 1v9L2.500 7.300h-2zM7.500 3.500q1.500 2 0 4M9.300 2q2.500 3.500 0 7M11 .7q3 4.800 0 9.600" /></svg></button>
        <button aria-label="アップロード" className={tray}><svg width="13" height="9" viewBox="0 0 13 9"><path d="M3 8.500Q.5 8.500.5 6T3 4Q4 .5 7 .7t3.500 3.300q2 .2 2 2.300t-2 2.200z" fill="#fff" /><path d="M6.500 7V4M5 5l1.500-1.500L8 5" fill="none" stroke="#e0d6cc" /></svg></button>
        <button aria-label="ペン" className={tray}><svg width="13" height="12" viewBox="0 0 13 12" fill="none" stroke="#333"><path d="M4 7.500L8.500 1.500q2-1.500 3 0t-1 3L6 9.500M7 6q4-2 5 .5T8 7.500M4 7.500q2 0 2 2Q5 11.500 2 11.500T1.500 8.500Q2.500 7 4 7.500z" /></svg></button>
        <button aria-label="同期" className="flex h-full w-[18px] items-center justify-center"><svg width="12" height="12" viewBox="0 0 12 12"><path d="M5 8L7.500 .5l4 9.500z" fill="#fff" stroke="#aaa" strokeWidth=".6" /><circle cx="3.700" cy="8.300" r="3.400" fill="#111" /><path d="M2.500 7l2.500 2.500M5 7L2.500 9.500" stroke="#fff" /></svg></button>
        <button aria-label="入力" className={tray}><svg width="12" height="12" viewBox="0 0 12 12"><path d="M0 0h12v12H0z" fill="#fff" stroke="#999" strokeWidth=".7" /><path d="M2 10L5.500 3M5 1.500l1.800 0L10 10.500H7.500z" fill="#111" stroke="#111" /></svg></button>
        <time className="ml-[7px] w-[23px] text-center text-[9px] leading-none text-[#222]">18:19</time>
        <button aria-label="通知" className="ml-3.5 mr-[18px]"><svg width="13" height="13" viewBox="0 0 13 13"><path d="M.5 .5h12v9h-4v3l-3-3h-5z" fill="#151515" /><path d="M2.500 3h8M2.500 5h8M2.500 7h5" stroke="#ddd" strokeWidth=".8" /></svg></button>
      </div>
    </div>
  );
}

export default function App() {
  return (
    <div lang="ja" className="flex h-screen flex-col overflow-hidden bg-[#f0f0f0] font-['Open_Sans','Noto_Sans_CJK_JP',sans-serif] text-[#222] [font-feature-settings:'palt']">
      <TitleBar />
      <MenuBar />
      <ToolBar />
      <OptionRow />
      <div className="flex min-h-0 flex-1">
        <SidePanel />
        <Canvas />
      </div>
      <LayerBar />
      <StatusBar />
      <TaskBar />
    </div>
  );
}
